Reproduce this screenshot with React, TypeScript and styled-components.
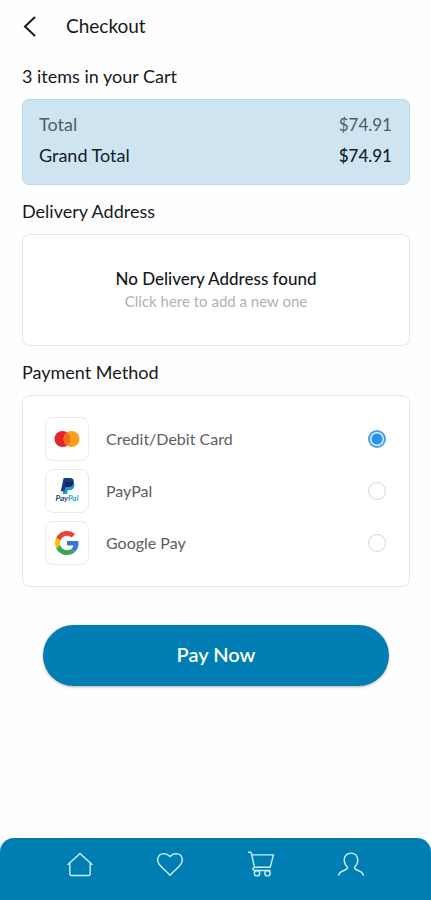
import { useState } from "react";
import styled, { createGlobalStyle } from "styled-components";

const GlobalStyle = createGlobalStyle`
  *, *::before, *::after { box-sizing: border-box; }
  body {
    margin: 0;
    background: #fefefe;
    color: #15191d;
    font-family: Lato, "Open Sans", sans-serif;
  }
  h1, h2, p, dl, dt, dd { margin: 0; font-weight: 400; }
  button { font: inherit; cursor: pointer; }
`;

const Screen = styled.div`
  display: flex;
  flex-direction: column;
  min-height: 100vh;
`;

const Header = styled.header`
  display: flex;
  align-items: center;
  gap: 24px;
  height: 52px;
  padding: 0 20px;
`;

const BackButton = styled.button`
  display: flex;
  padding: 0;
  border: 0;
  background: none;
  color: #15191d;
`;

const Title = styled.h1`
  font-size: 19px;
  line-height: 24px;
`;

const Content = styled.main`
  display: flex;
  flex-direction: column;
  padding: 12px 21px 24px 22px;
`;

const Section = styled.section`
  display: flex;
  flex-direction: column;
  gap: 11px;
  margin-bottom: 14px;
`;

const Heading = styled.h2`
  font-size: 18px;
  line-height: 24px;
`;

const Summary = styled.dl`
  padding: 9px 17px 13px 16px;
  border: 1px solid #b5d8e2;
  border-radius: 7px;
  background: #cee5f1;
`;

const SummaryRow = styled.div<{ $strong?: boolean }>`
  display: flex;
  justify-content: space-between;
  font-size: 18px;
  line-height: 31px;
  color: ${(p) => (p.$strong ? "#10202c" : "#4c5d69")};
`;

const Amount = styled.dd<{ $strong?: boolean }>`
  && {
    font-size: 17px;
    font-weight: ${(p) => (p.$strong ? 500 : 400)};
  }
`;

const AddressCard = styled.button`
  display: flex;
  flex-direction: column;
  align-items: center;
  justify-content: center;
  height: 112px;
  border: 1px solid #e5e6e7;
  border-radius: 8px;
  background: #fff;
`;

const AddressTitle = styled.span`
  font-size: 17px;
  font-weight: 500;
  line-height: 22px;
  color: #15191d;
`;

const AddressHint = styled.span`
  font-size: 15px;
  line-height: 22px;
  color: #b0b2b4;
`;

const MethodCard = styled.div`
  display: flex;
  flex-direction: column;
  gap: 8px;
  padding: 21px 23px 21px 22px;
  border: 1px solid #e5e6e7;
  border-radius: 8px;
  background: #fff;
`;

const MethodRow = styled.label`
  display: flex;
  align-items: center;
  gap: 17px;
  cursor: pointer;
`;

const LogoTile = styled.span`
  display: flex;
  align-items: center;
  justify-content: center;
  width: 44px;
  height: 44px;
  border: 1px solid #e9eaeb;
  border-radius: 8px;
`;

const MethodName = styled.span`
  flex: 1;
  font-size: 16px;
  line-height: 24px;
  color: #5c6064;
`;

const Radio = styled.input`
  appearance: none;
  width: 18px;
  height: 18px;
  margin: 0;
  border: 1px solid #d5d6d7;
  border-radius: 50%;
  background: #fff;

  &:checked {
    border: 2px solid #4a9fe6;
    background: radial-gradient(circle, #2492f0 5px, #e6f3fd 6px);
  }
`;

const PayButton = styled.button`
  height: 61px;
  margin: 24px 21px 0;
  padding: 0 0 3px;
  border: 0;
  border-radius: 31px;
  background: #007eb4;
  color: #fff;
  font-size: 20px;
  font-weight: 600;
  line-height: 24px;
  box-shadow: 0 1px 3px rgba(0, 0, 0, 0.3);
`;

const TabBar = styled.nav`
  display: flex;
  justify-content: space-around;
  height: 62px;
  margin-top: auto;
  padding: 12px 35px 0;
  border-radius: 14px 14px 0 0;
  background: #007eb4;
`;

const TabLink = styled.a`
  display: flex;
  height: 28px;
  color: #c8f0fa;
`;

const tabIcon = {
  width: 28,
  height: 28,
  viewBox: "0 0 28 28",
  fill: "none",
  stroke: "currentColor",
  strokeWidth: 1.4,
  strokeLinecap: "round" as const,
  strokeLinejoin: "round" as const,
  "aria-hidden": true,
};

const HomeIcon = () => (
  <svg {...tabIcon}>
    <path d="M2 14.4 14 3.5l12 10.9M3.8 13v10.5c0 1.300.7 2 2 2h16.400c1.300 0 2-.7 2-2V13" />
  </svg>
);

const HeartIcon = () => (
  <svg {...tabIcon}>
    <path d="M14 25.200C11.500 22.400 7 19 4 15.300 0 10.500 1.500 3.900 7.700 3.600c2.500 0 4.600 1 6.300 2.900 1.700-1.900 3.800-2.900 6.300-2.900 6.200.3 7.700 6.900 3.700 11.700C21 19 16.500 22.400 14 25.200Z" />
  </svg>
);

const CartIcon = () => (
  <svg {...tabIcon}>
    <path d="M1.500 2.200h2.300l.9 2.300 2.700 12.700h15.800l3.300-12.300H4.800M7.400 17.200c-2.300 1.300-1.800 3.300.5 3.300h15" />
    <circle cx="10" cy="23.200" r="2.700" />
    <circle cx="20.500" cy="23.200" r="2.700" />
  </svg>
);

const UserIcon = () => (
  <svg {...tabIcon}>
    <path d="M1.700 25.200c.3-2.200 2-3.500 5.300-4.700 2.500-1 3.900-1.700 3.500-3.300C8.300 15.300 7.200 13 7.200 10.300c0-4.400 2.800-7.200 6.800-7.200s6.800 2.800 6.800 7.200c0 2.700-1.100 5-3.300 6.900-.4 1.600 1 2.300 3.500 3.300 3.300 1.200 5 2.500 5.300 4.700" />
  </svg>
);

const MastercardLogo = () => (
  <svg width="28" height="18" viewBox="0 0 28 18" aria-hidden="true">
    <circle cx="9.500" cy="9" r="8" fill="#e9212a" />
    <circle cx="18.500" cy="9" r="8" fill="#f99f1b" />
    <path d="M14 2.390a8 8 0 0 1 0 13.220 8 8 0 0 1 0-13.220Z" fill="#f36b20" />
  </svg>
);

const PayPalLogo = () => (
  <svg width="30" height="28" viewBox="0 0 30 28" aria-hidden="true">
    <path d="M13.500 5h7c1.700.9 2.200 2.200 1.900 3.900-.6 3-2.600 4.300-5.500 4.300h-1.200L15 17h-4.500Z" fill="#1d9bd7" />
    <path d="M11.600 1h6.300c3 0 4.400 1.700 3.800 4.400-.6 3.100-2.600 4.500-5.600 4.500h-2.700l-.8 4.400H8.800Z" fill="#173a80" />
    <path d="M13.500 5h8.200c-.3 3.400-2.500 4.900-5.600 4.900h-2.700L12.600 14l.9-9Z" fill="#1b2661" />
    <text x="15" y="24" textAnchor="middle" fontFamily="Lato, sans-serif" fontSize="8" fontWeight="700" fontStyle="italic">
      <tspan fill="#213f82">Pay</tspan>
      <tspan fill="#28a7d8">Pal</tspan>
    </text>
  </svg>
);

const GoogleLogo = () => (
  <svg width="24" height="24" viewBox="0 0 48 48" aria-hidden="true">
    <path fill="#ea4335" d="M24 9.500c3.540 0 6.710 1.220 9.210 3.600l6.850-6.850C35.900 2.380 30.470 0 24 0 14.620 0 6.510 5.380 2.560 13.220l7.980 6.190C12.430 13.720 17.740 9.500 24 9.500z" />
    <path fill="#3478dc" d="M46.980 24.550c0-1.570-.15-3.090-.38-4.550H24v9.020h12.940c-.58 2.960-2.260 5.480-4.780 7.180l7.730 6c4.510-4.180 7.090-10.360 7.090-17.650z" />
    <path fill="#fbbc05" d="M10.530 28.590c-.48-1.450-.76-2.990-.76-4.590s.27-3.140.76-4.590l-7.980-6.190C.92 16.460 0 20.120 0 24s.92 7.540 2.560 10.780l7.970-6.190z" />
    <path fill="#34a853" d="M24 48c6.480 0 11.930-2.130 15.890-5.810l-7.730-6c-2.150 1.450-4.920 2.300-8.160 2.300-6.260 0-11.570-4.220-13.470-9.910l-7.980 6.190C6.510 42.620 14.620 48 24 48z" />
  </svg>
);

const methods = [
  { id: "card", name: "Credit/Debit Card", Logo: MastercardLogo },
  { id: "paypal", name: "PayPal", Logo: PayPalLogo },
  { id: "google", name: "Google Pay", Logo: GoogleLogo },
];

const tabs = [
  { name: "Home", Icon: HomeIcon },
  { name: "Favourites", Icon: HeartIcon },
  { name: "Cart", Icon: CartIcon },
  { name: "Profile", Icon: UserIcon },
];

export default function App() {
  const [method, setMethod] = useState("card");

  return (
    <Screen>
      <GlobalStyle />
      <Header>
        <BackButton type="button" aria-label="Back">
          <svg width="22" height="24" viewBox="0 0 22 24" fill="none" stroke="currentColor" strokeWidth="2" aria-hidden="true">
            <path d="M15 3 5 12.500l10 9.500" />
          </svg>
        </BackButton>
        <Title>Checkout</Title>
      </Header>

      <Content>
        <Section>
          <Heading>3 items in your Cart</Heading>
          <Summary>
            <SummaryRow>
              <dt>Total</dt>
              <Amount>$74.91</Amount>
            </SummaryRow>
            <SummaryRow $strong>
              <dt>Grand Total</dt>
              <Amount $strong>$74.91</Amount>
            </SummaryRow>
          </Summary>
        </Section>

        <Section>
          <Heading>Delivery Address</Heading>
          <AddressCard type="button">
            <AddressTitle>No Delivery Address found</AddressTitle>
            <AddressHint>Click here to add a new one</AddressHint>
          </AddressCard>
        </Section>

        <Section>
          <Heading>Payment Method</Heading>
          <MethodCard role="radiogroup" aria-label="Payment Method">
            {methods.map(({ id, name, Logo }) => (
              <MethodRow key={id}>
                <LogoTile>
                  <Logo />
                </LogoTile>
                <MethodName>{name}</MethodName>
                <Radio
                  type="radio"
                  name="method"
                  value={id}
                  checked={method === id}
                  onChange={() => setMethod(id)}
                />
              </MethodRow>
            ))}
          </MethodCard>
        </Section>

        <PayButton type="button">Pay Now</PayButton>
      </Content>

      <TabBar aria-label="Main">
        {tabs.map(({ name, Icon }) => (
          <TabLink key={name} href="#" aria-label={name}>
            <Icon />
          </TabLink>
        ))}
      </TabBar>
    </Screen>
  );
}
